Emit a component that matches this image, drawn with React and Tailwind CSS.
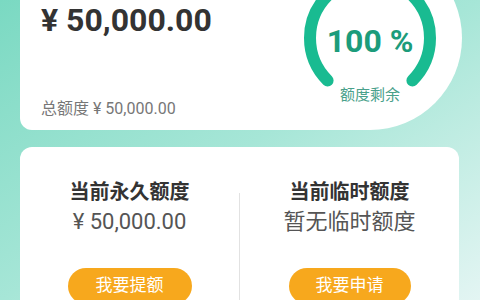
export default function App() {
  return (
    <div className="relative h-[300px] w-[480px] overflow-hidden bg-gradient-to-br from-[#7ad9c2] via-[#a6e6d7] to-[#e3f5f3] font-['Roboto','Noto_Sans_CJK_SC',sans-serif]">
      {/* top card */}
      <div className="relative ml-[20px] h-[130px] w-[350px] rounded-bl-xl bg-white pl-[21px]">
        <div className="pt-[4px] text-[32px] font-bold leading-none text-[#333]">¥ 50,000.00</div>
        <div className="mt-[65px] text-[16px] leading-none text-[#777]">总额度 ¥ 50,000.00</div>
      </div>

      {/* gauge circle */}
      <div className="absolute left-[278px] top-[-54px] flex h-[184px] w-[184px] flex-col items-center rounded-full bg-white">
        <svg className="absolute left-0 top-0" width="184" height="184" viewBox="0 0 184 184">
          <path
            d="M 49.6 134.4 A 60 60 0 1 1 134.4 134.4"
            fill="none"
            stroke="#19bb91"
            strokeWidth="12"
            strokeLinecap="round"
          />
        </svg>
        <div className="relative mt-[79px] text-[32px] font-bold leading-none text-[#1c9c7b]">100 %</div>
        <div className="relative mt-[31px] text-[15px] leading-none text-[#4aa18b]">额度剩余</div>
      </div>

      {/* bottom card */}
      <div className="ml-[20px] mt-[17px] grid h-[170px] w-[439px] grid-cols-[1fr_1px_1fr] rounded-xl bg-white">
        <div className="flex flex-col items-center pt-[31px]">
          <div className="text-[20px] font-bold leading-[28px] text-[#333]">当前永久额度</div>
          <div className="mt-[1px] text-[22px] leading-[30px] text-[#555]">¥ 50,000.00</div>
          <div className="mt-[31px] flex h-[36px] w-[124px] items-center justify-center rounded-full bg-[#f7a81d] text-[17px] text-white">我要提额</div>
        </div>
        <div className="mt-[46px] bg-[#e2e2e2]" />
        <div className="flex flex-col items-center pt-[31px]">
          <div className="text-[20px] font-bold leading-[28px] text-[#333]">当前临时额度</div>
          <div className="mt-[1px] text-[22px] leading-[30px] text-[#555]">暂无临时额度</div>
          <div className="mt-[31px] flex h-[36px] w-[122px] items-center justify-center rounded-full bg-[#f7a81d] text-[17px] text-white">我要申请</div>
        </div>
      </div>
    </div>
  );
}
